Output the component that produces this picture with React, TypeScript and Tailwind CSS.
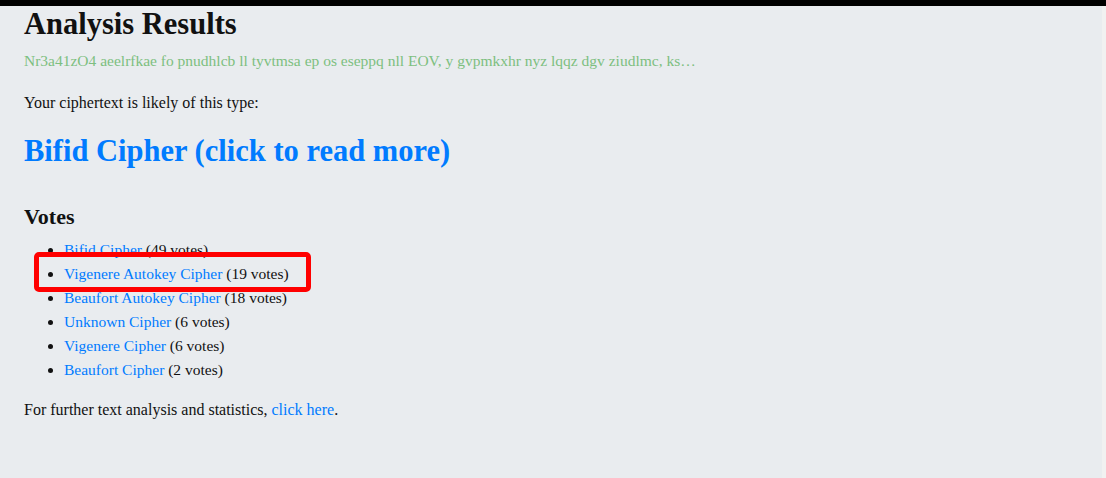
import React from "react";

const votes = [
  { name: "Bifid Cipher", votes: 49 },
  { name: "Vigenere Autokey Cipher", votes: 19 },
  { name: "Beaufort Autokey Cipher", votes: 18 },
  { name: "Unknown Cipher", votes: 6 },
  { name: "Vigenere Cipher", votes: 6 },
  { name: "Beaufort Cipher", votes: 2 },
];

export default function App() {
  return (
    <div
      className="min-h-screen flex flex-col bg-[#e9ecef] text-[#111]"
      style={{ fontFamily: '"Liberation Serif", "Times New Roman", serif' }}
    >
      <div className="h-[6px] bg-black shrink-0" />
      <div className="flex flex-1">
        <main className="relative flex-1 px-6 pb-10">
          <h1 className="text-[30.5px] leading-[36px] font-bold mt-0">Analysis Results</h1>
          <p className="mt-[7px] text-[15.5px] leading-[24px] text-[#7dbf80]">
            Nr3a41zO4 aeelrfkae fo pnudhlcb ll tyvtmsa ep os eseppq nll EOV, y gvpmkxhr nyz lqqz dgv ziudlmc, ks…
          </p>
          <p className="mt-[18px] text-[16px] leading-[24px]">Your ciphertext is likely of this type:</p>
          <a href="#" className="block mt-[16px] text-[30.5px] leading-[40px] font-bold text-[#007bff]">
            Bifid Cipher (click to read more)
          </a>
          <h2 className="mt-[32px] text-[22px] leading-[28px] font-bold">Votes</h2>
          <ul className="mt-[7px] list-disc pl-10 text-[15.5px] leading-[24px]">
            {votes.map((v) => (
              <li key={v.name}>
                <a href="#" className="text-[#007bff]">{v.name}</a> ({v.votes} votes)
              </li>
            ))}
          </ul>
          <p className="mt-[16px] text-[16px] leading-[24px]">
            For further text analysis and statistics, <a href="#" className="text-[#007bff]">click here</a>.
          </p>
          <div className="absolute left-[34px] top-[246px] w-[277px] h-[40px] border-[5px] border-[#ff0000] rounded-[5px] pointer-events-none" />
        </main>
        <div className="w-[4px] bg-[#f1f1f1] shrink-0" />
      </div>
    </div>
  );
}
